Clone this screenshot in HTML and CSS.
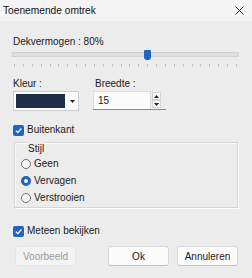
FILE: index.html
```html
<!DOCTYPE html>
<html lang="nl">
<head>
    <meta charset="UTF-8">
    <title>Toenemende omtrek</title>
    <link rel="stylesheet" href="styles.css">
</head>
<body>
    <div class="dialog">
        <div class="titlebar">
            <span class="title">Toenemende omtrek</span>
            <svg class="close" width="9" height="9" viewBox="0 0 9 9">
                <path d="M0.5 0.5 L8.5 8.5 M8.5 0.5 L0.5 8.5" stroke="#2a2a2a" stroke-width="1"/>
            </svg>
        </div>
        <div class="content">
            <div class="label">Dekvermogen : 80%</div>
            <div class="slider">
                <div class="track"></div>
                <div class="thumb"></div>
            </div>
            <div class="ticks">
                <span></span><span></span><span></span><span></span><span></span><span></span><span></span><span></span><span></span><span></span><span></span><span></span><span></span>
                <span></span><span></span><span></span><span></span><span></span><span></span><span></span><span></span><span></span><span></span><span></span><span></span><span></span>
            </div>

            <div class="row">
                <div class="field">
                    <div class="label">Kleur :</div>
                    <div class="colorbox">
                        <div class="swatch"></div>
                        <svg class="arrow" width="5" height="3" viewBox="0 0 5 3"><path d="M0 0 H5 L2.5 3 Z" fill="#222"/></svg>
                    </div>
                </div>
                <div class="field">
                    <div class="label width-label">Breedte :</div>
                    <div class="spin">
                        <div class="spin-input">15</div>
                        <div class="spin-buttons">
                            <span><svg width="5" height="3" viewBox="0 0 5 3"><path d="M0 3 H5 L2.5 0 Z" fill="#222"/></svg></span>
                            <span><svg width="5" height="3" viewBox="0 0 5 3"><path d="M0 0 H5 L2.5 3 Z" fill="#222"/></svg></span>
                        </div>
                    </div>
                </div>
            </div>

            <label class="check outer-check">
                <span class="box">
                    <svg width="9" height="9" viewBox="0 0 9 9"><path d="M1.8 4.6 L3.8 6.6 L7.4 2.5" fill="none" stroke="#fff" stroke-width="1.3"/></svg>
                </span>
                Buitenkant
            </label>

            <div class="group">
                <div class="group-title">Stijl</div>
                <label class="radio"><span class="dot"></span>Geen</label>
                <label class="radio"><span class="dot selected"></span>Vervagen</label>
                <label class="radio"><span class="dot"></span>Verstrooien</label>
            </div>

            <label class="check preview-check">
                <span class="box">
                    <svg width="9" height="9" viewBox="0 0 9 9"><path d="M1.8 4.6 L3.8 6.6 L7.4 2.5" fill="none" stroke="#fff" stroke-width="1.3"/></svg>
                </span>
                Meteen bekijken
            </label>

            <div class="buttons">
                <button class="btn disabled">Voorbeeld</button>
                <div class="right">
                    <button class="btn">Ok</button>
                    <button class="btn">Annuleren</button>
                </div>
            </div>
        </div>
    </div>
</body>
</html>
```

FILE: styles.css
```css
html, body {
    margin: 0;
    padding: 0;
}
body {
    width: 252px;
    height: 278px;
    font-family: "Liberation Sans", Arial, sans-serif;
    font-size: 10px;
    color: #1a1a1a;
    background-color: #ececec;
    overflow: hidden;
}
.titlebar {
    height: 21px;
    background-color: #f4f4f4;
    display: flex;
    align-items: center;
    justify-content: space-between;
    padding: 0 8px 0 3px;
}
.title {
    font-size: 10.2px;
    color: #111;
}
.content {
    padding: 14px 14px 0 13px;
}
.label {
    line-height: 14px;
}
.slider {
    position: relative;
    height: 12px;
}
.track {
    position: absolute;
    left: -1px;
    right: -1px;
    top: 3px;
    height: 5px;
    background-color: #dedede;
    border: 1px solid #d2d2d2;
    box-sizing: border-box;
}
.thumb {
    position: absolute;
    left: 131px;
    top: 1px;
    width: 7px;
    height: 10px;
    background-color: #1f65c6;
    border-radius: 1px 1px 3px 3px;
}
.ticks {
    display: flex;
    justify-content: space-between;
    padding: 0 1px;
    margin-top: 3px;
    height: 3px;
}
.ticks span {
    width: 1px;
    height: 3px;
    background-color: #c4c4c4;
}
.row {
    display: flex;
    gap: 14px;
    margin-top: 10px;
}
.colorbox {
    width: 66px;
    height: 20px;
    box-sizing: border-box;
    background-color: #fbfbfb;
    border: 1px solid #cdcdcd;
    display: flex;
    align-items: center;
    padding: 1px 2px;
}
.swatch {
    width: 49px;
    height: 14px;
    background-color: #1e2e48;
}
.arrow {
    margin-left: 5px;
}
.width-label {
    padding-left: 2px;
}
.spin {
    display: flex;
    height: 19px;
    width: 73px;
    border-bottom: 1px solid #8c8c8c;
    box-sizing: border-box;
}
.spin-input {
    width: 58px;
    box-sizing: border-box;
    border: 1px solid #dcdcdc;
    border-bottom: none;
    background-color: #fbfbfb;
    padding: 2px 4px;
    line-height: 14px;
}
.spin-buttons {
    display: flex;
    flex-direction: column;
    margin: 1px 0 1px 1px;
    width: 9px;
}
.spin-buttons span {
    flex: 1;
    display: flex;
    align-items: center;
    justify-content: center;
    background-color: #f7f7f7;
    border: 1px solid #d4d4d4;
}
.check {
    display: flex;
    align-items: center;
    gap: 3px;
    height: 14px;
    line-height: 14px;
}
.outer-check {
    margin-top: 12px;
}
.box {
    width: 11px;
    height: 11px;
    border-radius: 2px;
    display: flex;
    align-items: center;
    justify-content: center;
    background-color: #1f65c6;
}
.group {
    margin: 5px 0 0 1px;
    padding: 0 6px 1px 6px;
    border: 1px solid #d6d6d6;
    box-shadow: inset 1px 1px 0 #fafafa, 1px 1px 0 #fafafa;
    width: 224px;
    box-sizing: border-box;
}
.group-title {
    display: inline-block;
    margin: -4px 0 -1px 5px;
    padding: 0 2px;
    line-height: 14px;
    background-color: #ececec;
}
.radio {
    display: flex;
    align-items: center;
    gap: 3px;
    height: 17px;
}
.dot {
    width: 8px;
    height: 8px;
    border: 1px solid #6f6f6f;
    border-radius: 50%;
    background-color: #f6f6f6;
}
.dot.selected {
    border: 3px solid #1f65c6;
    width: 4px;
    height: 4px;
    background-color: #fff;
}
.preview-check {
    margin-top: 16px;
}
.buttons {
    display: flex;
    justify-content: space-between;
    margin-top: 8px;
    padding-left: 2px;
}
.right {
    display: flex;
    gap: 8px;
}
.btn {
    font-family: inherit;
    font-size: 10px;
    height: 20px;
    padding: 0;
    background-color: #fbfbfb;
    border: 1px solid #d8d8d8;
    border-bottom-color: #c4c4c4;
    border-radius: 3px;
    color: #1a1a1a;
    width: 61px;
}
.btn.disabled {
    background-color: #f3f3f3;
    border-color: #e6e6e6;
    color: #9c9c9c;
}
```
